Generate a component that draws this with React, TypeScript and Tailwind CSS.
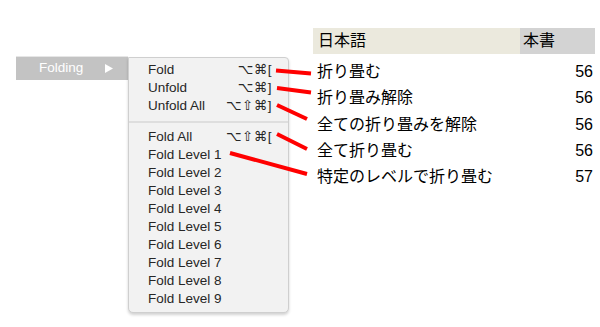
import React from "react";

const items1 = [
  { label: "Fold", sc: "⌥⌘[" },
  { label: "Unfold", sc: "⌥⌘]" },
  { label: "Unfold All", sc: "⌥⇧⌘]" },
];
const items2 = [
  { label: "Fold All", sc: "⌥⇧⌘[" },
  ...[1, 2, 3, 4, 5, 6, 7, 8, 9].map((n) => ({ label: `Fold Level ${n}`, sc: "" })),
];

const rows = [
  ["折り畳む", "56"],
  ["折り畳み解除", "56"],
  ["全ての折り畳みを解除", "56"],
  ["全て折り畳む", "56"],
  ["特定のレベルで折り畳む", "57"],
];

function Item({ label, sc }: { label: string; sc: string }) {
  return (
    <div className="flex h-[18px] items-center justify-between pl-[19px] pr-[16px]">
      <span>{label}</span>
      {sc && (
        <span className="tracking-[0.5px]" style={{ fontFamily: '"Liberation Sans", "DejaVu Sans", sans-serif' }}>
          {sc}
        </span>
      )}
    </div>
  );
}

export default function App() {
  return (
    <div className="relative h-[327px] w-[600px] overflow-hidden bg-white">
      <div className="flex items-start">
        <div
          className="flex items-start pl-[16px] pt-[56px] text-[13.5px] text-[#262626]"
          style={{ fontFamily: '"Liberation Sans", Arial, sans-serif' }}
        >
          <div className="flex h-[24px] w-[112px] items-center border-t border-[#e6e6e6] bg-[#c3c3c3] pl-[23px] pr-[15px] text-white">
            <span className="flex-1">Folding</span>
            <svg width="8" height="9" viewBox="0 0 8 9">
              <path d="M0 0 L8 4.5 L0 9 Z" fill="#ffffff" />
            </svg>
          </div>
          <div className="mt-[1px] flex h-[256px] w-[161px] flex-col rounded-b-[5px] rounded-tr-[4px] border border-[#cfcfcf] bg-[#f2f2f2] pt-[3px] shadow-[0_2px_3px_rgba(0,0,0,0.18)]">
            {items1.map((it) => (
              <Item key={it.label} {...it} />
            ))}
            <div className="flex h-[13px] items-center">
              <div className="h-[2px] w-full bg-[#dedede]" />
            </div>
            {items2.map((it) => (
              <Item key={it.label} {...it} />
            ))}
          </div>
        </div>
        <div
          className="ml-[24px] mt-[28px] w-[282px] text-[16px] text-black"
          style={{ fontFamily: '"Liberation Sans", "Noto Sans CJK JP", sans-serif' }}
        >
          <div className="flex h-[26px] items-center">
            <div className="flex h-full w-[207px] items-center bg-[#ebe9dd] pl-[5px]">日本語</div>
            <div className="flex h-full flex-1 items-center bg-[#d3d3d3] pl-[3px]">本書</div>
          </div>
          <div className="mt-[5px]">
            {rows.map(([t, n]) => (
              <div key={t} className="flex h-[26.3px] items-center justify-between pl-[4px] pr-[2px]">
                <span>{t}</span>
                <span>{n}</span>
              </div>
            ))}
          </div>
        </div>
      </div>
      <svg className="pointer-events-none absolute left-0 top-0" width="600" height="327">
        <g stroke="#ff0000" strokeWidth="4" strokeLinecap="butt">
          <line x1="276" y1="70.5" x2="311" y2="73.5" />
          <line x1="277" y1="88" x2="311" y2="92.5" />
          <line x1="277" y1="105" x2="307" y2="119" />
          <line x1="277" y1="134" x2="307" y2="149" />
          <line x1="230" y1="153" x2="307" y2="174" />
        </g>
      </svg>
    </div>
  );
}
